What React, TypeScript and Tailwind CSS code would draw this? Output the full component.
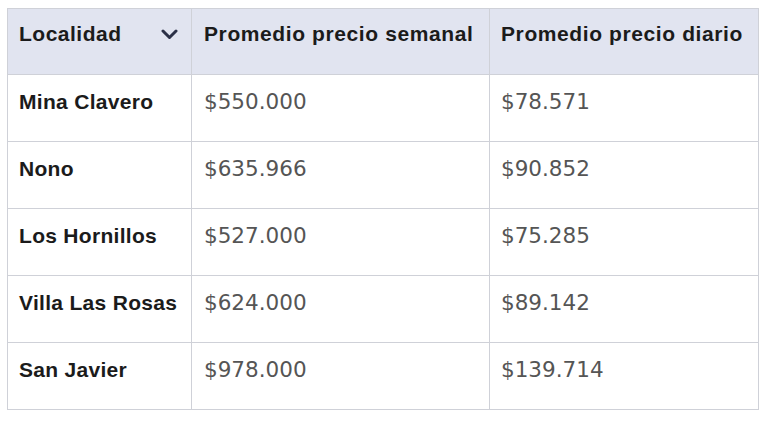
const rows = [
  { place: 'Mina Clavero', weekly: '$550.000', daily: '$78.571' },
  { place: 'Nono', weekly: '$635.966', daily: '$90.852' },
  { place: 'Los Hornillos', weekly: '$527.000', daily: '$75.285' },
  { place: 'Villa Las Rosas', weekly: '$624.000', daily: '$89.142' },
  { place: 'San Javier', weekly: '$978.000', daily: '$139.714' },
]

function Chevron() {
  return (
    <svg width="17" height="11" viewBox="0 0 17 11" fill="none" stroke="#2b3047" strokeWidth="3" strokeLinecap="round" strokeLinejoin="round">
      <polyline points="2 2 8.5 8.5 15 2" />
    </svg>
  )
}

export default function App() {
  return (
    <div className="w-[767px] h-[421px] bg-white pt-2 pl-[7px]" style={{ fontFamily: '"Liberation Sans", Arial, sans-serif' }}>
      <table className="border-collapse w-[751px] table-fixed">
        <colgroup>
          <col className="w-[184px]" />
          <col className="w-[298px]" />
          <col className="w-[269px]" />
        </colgroup>
        <thead>
          <tr className="bg-[#e1e4f0] h-[66px]">
            <th className="border border-[#cfd1d8] pl-[11px] pr-[13px] pb-[15px] text-left align-middle font-bold text-[21px] text-[#1b1b1b] tracking-[0.5px]">
              <div className="flex items-center justify-between">
                <span>Localidad</span>
                <Chevron />
              </div>
            </th>
            <th className="border border-[#cfd1d8] px-[12px] pb-[15px] text-left align-middle font-bold text-[21px] text-[#1b1b1b] tracking-[0.6px] whitespace-nowrap">
              Promedio precio semanal
            </th>
            <th className="border border-[#cfd1d8] px-[11px] pb-[15px] text-left align-middle font-bold text-[21px] text-[#1b1b1b] tracking-[0.6px] whitespace-nowrap">
              Promedio precio diario
            </th>
          </tr>
        </thead>
        <tbody>
          {rows.map(r => (
            <tr key={r.place} className="h-[67px]">
              <td className="border border-[#cfd1d8] px-[11px] pb-[13px] align-middle font-bold text-[21px] text-[#1b1b1b] tracking-[0.3px] whitespace-nowrap">
                {r.place}
              </td>
              <td className="border border-[#cfd1d8] px-[12px] pb-[11px] align-middle text-[21.5px] text-[#555] font-['DejaVu_Sans',sans-serif]">
                {r.weekly}
              </td>
              <td className="border border-[#cfd1d8] px-[11px] pb-[11px] align-middle text-[21.5px] text-[#555] font-['DejaVu_Sans',sans-serif]">
                {r.daily}
              </td>
            </tr>
          ))}
        </tbody>
      </table>
    </div>
  )
}
